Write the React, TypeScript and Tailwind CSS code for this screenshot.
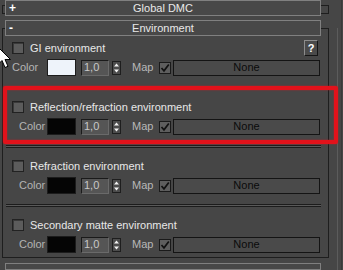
import React from "react";

const font = "font-['Liberation_Sans',Arial,sans-serif]";

function TitleBar({ sign, label }: { sign: string; label: string }) {
  return (
    <div className="ml-[2px] w-[316px] h-[16px] border border-[#808080] bg-[#484848] grid grid-cols-[16px_1fr_16px] items-center text-[11px] text-[#e8e8e8] leading-none">
      <span className="pl-[3px] font-bold text-[12px] text-white">{sign}</span>
      <span className="text-center">{label}</span>
      <span />
    </div>
  );
}

function Box() {
  return <div className="w-[12px] h-[12px] border border-[#222] bg-[#5c5c5c] shadow-[inset_1px_1px_0_#3a3a3a]" />;
}

function MapCheck() {
  return (
    <div className="w-[12px] h-[12px] border border-[#1a1a1a] bg-[#5e5e5e] flex items-center justify-center">
      <svg width="10" height="10" viewBox="0 0 10 10">
        <path d="M1.5 5 L4 7.8 L8.8 1.6" fill="none" stroke="#111" strokeWidth="1.7" />
      </svg>
    </div>
  );
}

function Header({ label, help }: { label: string; help?: boolean }) {
  return (
    <div className="h-[16px] flex items-center">
      <div className="ml-[9px]">
        <Box />
      </div>
      <span className="ml-[6px] text-[11px] text-[#e8e8e8] leading-none">{label}</span>
      {help && (
        <div className="ml-auto mr-[10px] w-[14px] h-[16px] border border-t-[#8c8c8c] border-l-[#8c8c8c] border-b-[#151515] border-r-[#151515] bg-[#4a4a4a] flex items-center justify-center text-[11px] font-bold text-white leading-none">
          ?
        </div>
      )}
    </div>
  );
}

function ColorRow({ swatch, labelPad }: { swatch: string; labelPad: string }) {
  return (
    <div className="mt-[3px] h-[17px] flex items-center">
      <div className={`w-[44px] text-[11px] text-[#b4b4b4] leading-none ${labelPad}`}>Color</div>
      <div className="w-[29px] h-[17px] border border-[#1c1c1c]" style={{ background: swatch }} />
      <div className="ml-[5px] w-[28px] h-[16px] border border-t-[#1a1a1a] border-l-[#1a1a1a] border-b-[#6a6a6a] border-r-[#6a6a6a] bg-[#555555] flex items-center pl-[2px] text-[11px] text-[#c8c8c8] leading-none">
        1,0
      </div>
      <div className="ml-[3px] w-[9px] h-[14px] border border-[#1e1e1e] bg-[#4c4c4c]">
        <svg width="7" height="12" viewBox="0 0 7 12" className="block">
          <path d="M1 4.5 L3.5 1.5 L6 4.5 Z" fill="#f2f2f2" />
          <path d="M1 7.5 L3.5 10.5 L6 7.5 Z" fill="#f2f2f2" />
        </svg>
      </div>
      <span className="ml-[11px] w-[21px] text-[11px] text-[#b8b8b8] leading-none">Map</span>
      <div className="ml-[6px]">
        <MapCheck />
      </div>
      <div className="ml-[2px] w-[147px] h-[16px] border border-[#141414] bg-[#4a4a4a] flex items-center justify-center text-[11px] text-[#0a0a0a] leading-none">
        None
      </div>
    </div>
  );
}

function Separator() {
  return <div className="ml-[3px] w-[315px] h-[3px] border-y border-[#1c1c1c] bg-[#595959]" />;
}

export default function App() {
  return (
    <div className={`relative w-[343px] h-[270px] overflow-hidden bg-[#464646] flex ${font}`}>
      <div className="w-[331px] flex flex-col">
        {/* Global DMC (collapsed) */}
        <div className="mt-[5px] ml-[2px] w-[327px] h-[9px] border border-[#1e1e1e]">
          <div className="-mt-[6px]">
            <TitleBar sign="+" label="Global DMC" />
          </div>
        </div>
        {/* Environment */}
        <div className="mt-[14px] ml-[2px] w-[327px] border border-[#1e1e1e] pb-[4px]">
          <div className="-mt-[9px]">
            <TitleBar sign="-" label="Environment" />
          </div>
          <div className="mt-[4px]">
            <Header label="GI environment" help />
            <ColorRow swatch="#eef3fa" labelPad="pl-[9px]" />
          </div>
          <div className="mt-[10px]">
            <Separator />
          </div>
          <div className="mt-[10px]">
            <Header label="Reflection/refraction environment" />
            <ColorRow swatch="#050505" labelPad="pl-[16px]" />
          </div>
          <div className="mt-[10px]">
            <Separator />
          </div>
          <div className="mt-[10px]">
            <Header label="Refraction environment" />
            <ColorRow swatch="#050505" labelPad="pl-[16px]" />
          </div>
          <div className="mt-[10px]">
            <Separator />
          </div>
          <div className="mt-[10px]">
            <Header label="Secondary matte environment" />
            <ColorRow swatch="#050505" labelPad="pl-[16px]" />
          </div>
        </div>
        <div className="mt-[5px] ml-[5px] w-[316px] h-[16px] border border-[#808080] bg-[#484848]" />
      </div>
      <div className="ml-[6px] w-[1px] mt-[28px] bg-[#5c5c5c]" />
      <div className="ml-[3px] w-[1px] bg-[#3a3a3a]" />

      {/* red highlight annotation */}
      <div className="absolute left-[3px] top-[86px] w-[335px] h-[58px] border-4 border-[#e2121b] rounded-[2px] shadow-[0_0_2px_rgba(226,18,27,0.7),inset_0_0_2px_rgba(226,18,27,0.7)]" />

      {/* mouse cursor */}
      <svg className="absolute left-[-3px] top-[46px]" width="15" height="23" viewBox="0 0 15 23">
        <path d="M0.5 0.5 L0.5 19 L5 14.5 L8 21.5 L11 20.3 L8 13.5 L13.5 13.5 Z" fill="#ffffff" stroke="#000" strokeWidth="1" />
      </svg>
    </div>
  );
}
